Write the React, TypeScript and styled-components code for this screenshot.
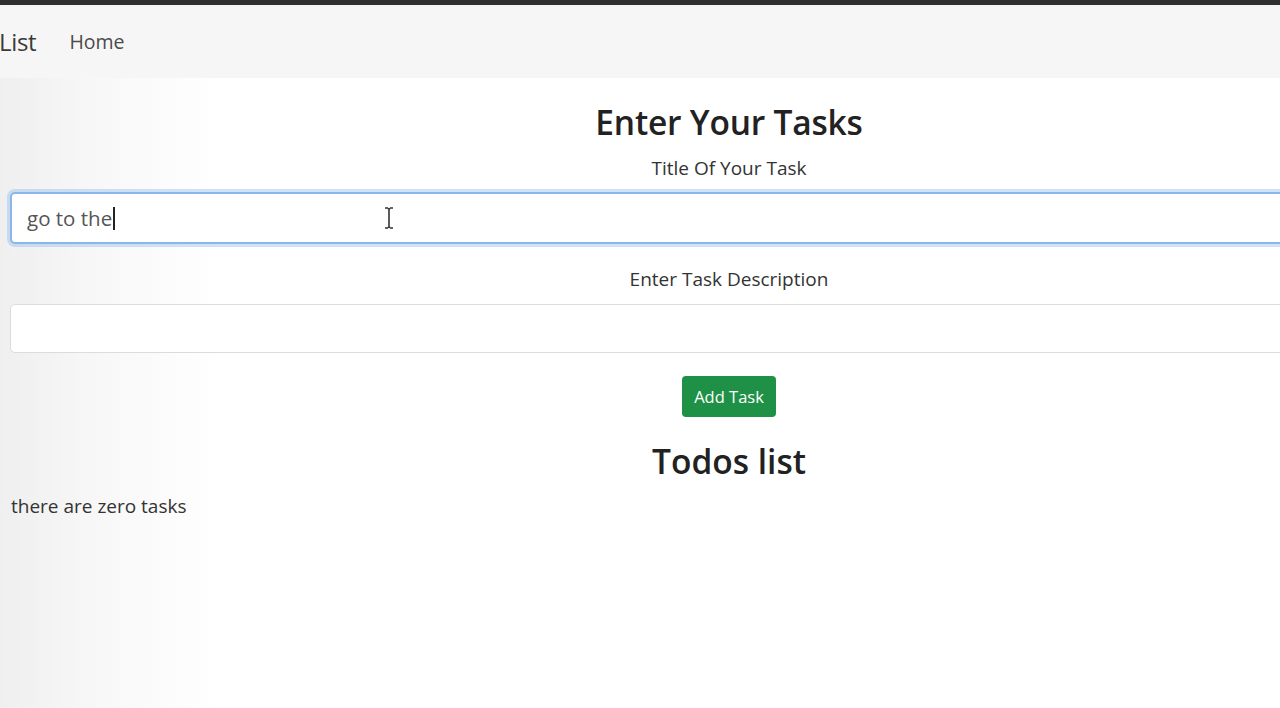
import React from "react";
import styled, { createGlobalStyle } from "styled-components";

const Global = createGlobalStyle`
  html, body { margin: 0; padding: 0; }
  body {
    font-family: "Open Sans", "Noto Sans", sans-serif;
    color: #212529;
    background: #fff;
    overflow: hidden;
  }
`;

const Page = styled.div`
  width: 1280px;
  height: 708px;
  overflow: hidden;
  position: relative;
  background: linear-gradient(90deg, #efefef 0px, #f7f7f7 90px, #ffffff 220px);
`;

const TopStrip = styled.div`
  height: 5px;
  background: #2f2f2f;
`;

const Navbar = styled.nav`
  height: 73px;
  background: #f6f6f7;
  display: flex;
  align-items: center;
  gap: 33px;
  box-sizing: border-box;
`;

const Brand = styled.span`
  font-size: 24px;
  color: #3a3a3a;
  margin-left: -1px;
  letter-spacing: -0.3px;
`;

const NavLink = styled.span`
  font-size: 19.5px;
  color: #4b4b4b;
`;

const Main = styled.main`
  width: 1438px;
  margin-left: 10px;
  display: flex;
  flex-direction: column;
  align-items: center;
`;

const Heading = styled.h1`
  margin: 21px 0 0;
  font-size: 33.5px;
  font-weight: 600;
  line-height: 46px;
  color: #222;
  letter-spacing: -0.2px;
`;

const Label = styled.label<{ $mt: number }>`
  font-size: 19px;
  color: #333;
  line-height: 26px;
  margin-top: ${(p) => p.$mt}px;
`;

const Field = styled.div<{ $focus?: boolean; $h: number; $mt: number }>`
  align-self: stretch;
  height: ${(p) => p.$h}px;
  margin-top: ${(p) => p.$mt}px;
  box-sizing: border-box;
  border-radius: 5px;
  background: #fff;
  border: ${(p) => (p.$focus ? "2px solid #8ab6ea" : "1.5px solid #dcdcdc")};
  box-shadow: ${(p) => (p.$focus ? "0 0 0 3px rgba(150,190,240,0.45)" : "none")};
  display: flex;
  align-items: center;
  padding-left: 15px;
  font-size: 20.5px;
  color: #555;
`;

const Caret = styled.span`
  display: inline-block;
  width: 1.5px;
  height: 23px;
  background: #222;
  margin-left: 1px;
`;

const Button = styled.button`
  margin-top: 23px;
  background: #1e9147;
  color: #fff;
  border: none;
  border-radius: 4px;
  width: 94px;
  height: 41px;
  font-family: inherit;
  font-size: 16.5px;
  padding: 0;
`;

const SubHeading = styled.h2`
  margin: 21px 0 0;
  font-size: 33.5px;
  font-weight: 600;
  line-height: 46px;
  color: #222;
`;

const Empty = styled.p`
  align-self: flex-start;
  margin: 9px 0 0 1px;
  font-size: 19px;
  color: #333;
`;

const Cursor = styled.svg`
  position: absolute;
  left: 383px;
  top: 206px;
`;

export default function App() {
  return (
    <Page>
      <Global />
      <TopStrip />
      <Navbar>
        <Brand>List</Brand>
        <NavLink>Home</NavLink>
      </Navbar>
      <Main>
        <Heading>Enter Your Tasks</Heading>
        <Label $mt={10}>Title Of Your Task</Label>
        <Field $focus $h={52} $mt={11}>
          go to the<Caret />
        </Field>
        <Label $mt={22}>Enter Task Description</Label>
        <Field $h={49} $mt={12} />
        <Button>Add Task</Button>
        <SubHeading>Todos list</SubHeading>
        <Empty>there are zero tasks</Empty>
      </Main>
      <Cursor width="12" height="24" viewBox="0 0 12 24">
        <path d="M2 2 H5 M7 2 H10 M6 3 V21 M2 22 H5 M7 22 H10 M5 2.5 Q6 3 7 2.5 M5 21.5 Q6 21 7 21.5" stroke="#333" strokeWidth="1.6" fill="none" />
      </Cursor>
    </Page>
  );
}
